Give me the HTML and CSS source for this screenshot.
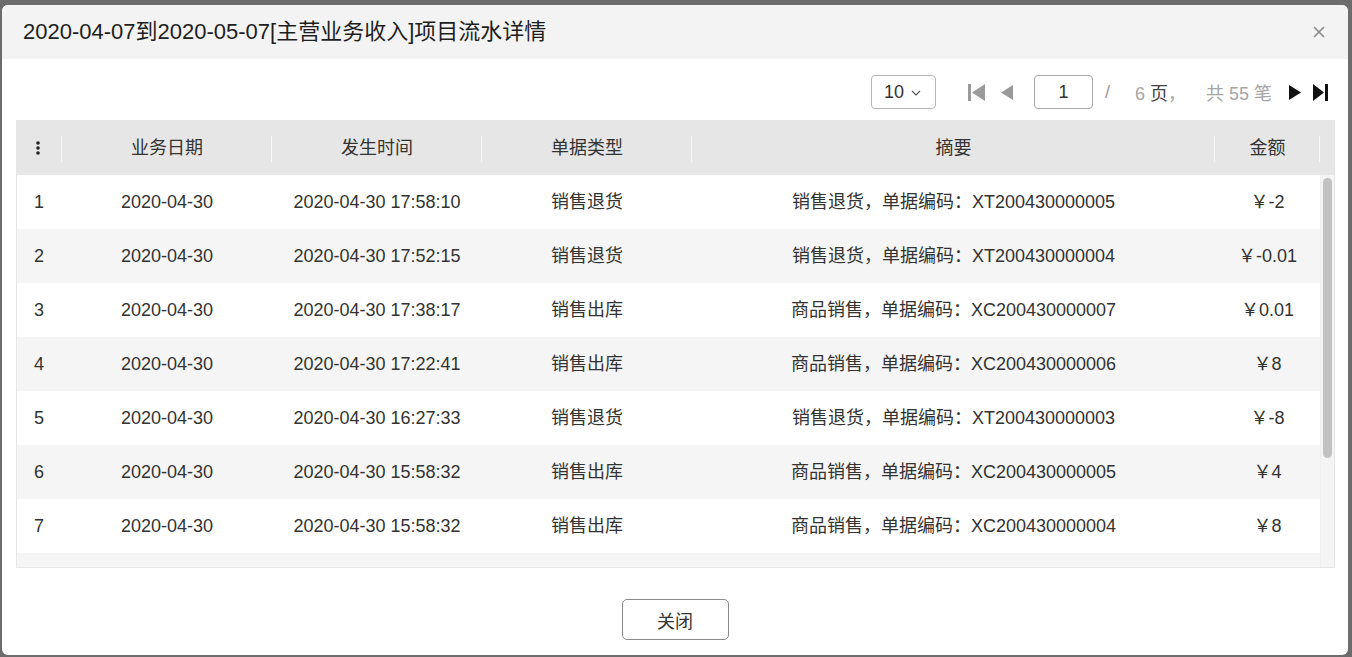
FILE: index.html
```html
<!DOCTYPE html>
<html lang="zh-CN">
<head>
<meta charset="utf-8">
<title>项目流水详情</title>
<link rel="stylesheet" href="styles.css">
</head>
<body>
<div class="dialog">
  <div class="dlg-head">
    <div class="dlg-title">2020-04-07到2020-05-07[主营业务收入]项目流水详情</div>
    <svg class="dlg-close" width="12" height="12" viewBox="0 0 12 12"><path d="M1 1L11 11M11 1L1 11" stroke="#8a8a8a" stroke-width="1.6" fill="none"/></svg>
  </div>
  <div class="toolbar">
    <div class="size-select"><span>10</span><svg width="10" height="6" viewBox="0 0 10 6"><path d="M1 1L5 5L9 1" stroke="#555" stroke-width="1.2" fill="none"/></svg></div>
    <svg class="pg-first" width="17" height="17" viewBox="0 0 17 17"><rect x="0" y="0" width="3" height="17" fill="#9a9a9a"/><path d="M17 0L4 8.5L17 17Z" fill="#9a9a9a"/></svg>
    <svg class="pg-prev" width="12" height="17" viewBox="0 0 12 17"><path d="M12 1L0 8.5L12 16Z" fill="#9a9a9a"/></svg>
    <div class="pg-input">1</div>
    <span class="pg-slash">/</span>
    <span class="pg-muted pg-pages">6 <span class="pg-dark">页</span>，</span>
    <span class="pg-muted pg-total">共 55 笔</span>
    <svg class="pg-next" width="12" height="17" viewBox="0 0 12 17"><path d="M0 1L12 8.5L0 16Z" fill="#111"/></svg>
    <svg class="pg-last" width="15" height="17" viewBox="0 0 15 17"><path d="M0 0L11 8.5L0 17Z" fill="#111"/><rect x="12" y="0" width="3" height="17" fill="#111"/></svg>
  </div>
  <div class="grid">
    <div class="grid-head">
      <div class="hcell hmenu"><svg width="4" height="14" viewBox="0 0 4 14"><circle cx="2" cy="2" r="1.8" fill="#222"/><circle cx="2" cy="7" r="1.8" fill="#222"/><circle cx="2" cy="12" r="1.8" fill="#222"/></svg></div>
      <div class="hcell">业务日期</div>
      <div class="hcell">发生时间</div>
      <div class="hcell">单据类型</div>
      <div class="hcell">摘要</div>
      <div class="hcell">金额</div>
      <div class="hcell hpad"></div>
    </div>
    <div class="grid-body">
      <div class="rows">
        <div class="row"><div class="c idx">1</div><div class="c">2020-04-30</div><div class="c">2020-04-30 17:58:10</div><div class="c">销售退货</div><div class="c">销售退货，单据编码：XT200430000005</div><div class="c">￥-2</div></div>
        <div class="row"><div class="c idx">2</div><div class="c">2020-04-30</div><div class="c">2020-04-30 17:52:15</div><div class="c">销售退货</div><div class="c">销售退货，单据编码：XT200430000004</div><div class="c">￥-0.01</div></div>
        <div class="row"><div class="c idx">3</div><div class="c">2020-04-30</div><div class="c">2020-04-30 17:38:17</div><div class="c">销售出库</div><div class="c">商品销售，单据编码：XC200430000007</div><div class="c">￥0.01</div></div>
        <div class="row"><div class="c idx">4</div><div class="c">2020-04-30</div><div class="c">2020-04-30 17:22:41</div><div class="c">销售出库</div><div class="c">商品销售，单据编码：XC200430000006</div><div class="c">￥8</div></div>
        <div class="row"><div class="c idx">5</div><div class="c">2020-04-30</div><div class="c">2020-04-30 16:27:33</div><div class="c">销售退货</div><div class="c">销售退货，单据编码：XT200430000003</div><div class="c">￥-8</div></div>
        <div class="row"><div class="c idx">6</div><div class="c">2020-04-30</div><div class="c">2020-04-30 15:58:32</div><div class="c">销售出库</div><div class="c">商品销售，单据编码：XC200430000005</div><div class="c">￥4</div></div>
        <div class="row"><div class="c idx">7</div><div class="c">2020-04-30</div><div class="c">2020-04-30 15:58:32</div><div class="c">销售出库</div><div class="c">商品销售，单据编码：XC200430000004</div><div class="c">￥8</div></div>
        <div class="row row-partial"></div>
      </div>
      <div class="vscroll"><div class="vthumb"></div></div>
    </div>
  </div>
  <div class="dlg-foot">
    <button class="btn-close" type="button">关闭</button>
  </div>
</div>
</body>
</html>
```

FILE: styles.css
```css
* { box-sizing: border-box; }
html, body { margin: 0; padding: 0; }
body {
  background: #6c6c6c;
  width: 1352px;
  height: 657px;
  overflow: hidden;
  font-family: "Liberation Sans", "Noto Sans CJK SC", sans-serif;
  color: #333;
  padding: 5px 4px 2px 2px;
}
.dialog {
  background: #fff;
  border-radius: 6px;
  height: 650px;
  overflow: hidden;
  display: flex;
  flex-direction: column;
}
.dlg-head {
  height: 54px;
  background: #f3f3f3;
  display: flex;
  align-items: center;
  padding: 0 23px 0 21px;
}
.dlg-title {
  flex: 1;
  font-size: 22px;
  color: #1e1e1e;
  line-height: 28px;
}
.dlg-close { display: block; }

.toolbar {
  display: flex;
  justify-content: flex-end;
  align-items: center;
  padding: 16px 20px 0 0;
  height: 50px;
  font-size: 18px;
}
.size-select {
  width: 65px;
  height: 34px;
  border: 1px solid #b5b5b5;
  border-radius: 4px;
  display: flex;
  align-items: center;
  padding-left: 12px;
  color: #333;
  line-height: 1;
}
.size-select svg { margin-left: 7px; margin-top: 2px; }
.pg-first { margin-left: 32px; }
.pg-prev { margin-left: 16px; }
.pg-input {
  margin-left: 21px;
  width: 59px;
  height: 34px;
  border: 1px solid #aaa;
  border-radius: 4px;
  text-align: center;
  line-height: 32px;
  color: #333;
}
.pg-slash { margin-left: 12px; color: #999; }
.pg-muted { color: #a5a5a5; }
.pg-dark { color: #444; }
.pg-pages { margin-left: 25px; }
.pg-total { margin-left: 20px; }
.pg-next { margin-left: 17px; }
.pg-last { margin-left: 12px; }

.grid {
  margin: 11px 13px 0 14px;
  border: 1px solid #e6e6e6;
  height: 448px;
  display: flex;
  flex-direction: column;
}
.grid-head {
  height: 54px;
  background: #e6e6e6;
  display: grid;
  grid-template-columns: 45px 210px 210px 210px 523px 105px 14px;
  flex: none;
}
.hcell {
  position: relative;
  display: flex;
  align-items: center;
  justify-content: center;
  font-size: 18px;
  color: #333;
  line-height: 24px;
}
.hcell::after {
  content: "";
  position: absolute;
  right: 0;
  top: 15px;
  height: 26px;
  width: 1px;
  background: #f6f6f6;
}
.hpad::after { display: none; }
.hmenu { justify-content: flex-start; padding-left: 19px; }

.grid-body {
  flex: 1;
  display: flex;
  min-height: 0;
}
.rows {
  flex: 1;
  overflow: hidden;
}
.vscroll {
  width: 14px;
  flex: none;
  background: #f4f4f4;
  border-left: 1px solid #efefef;
  padding: 3px 2px 0 2px;
}
.vthumb {
  height: 280px;
  background: #c1c1c1;
  border-radius: 5px;
}
.row {
  display: grid;
  grid-template-columns: 45px 210px 210px 210px 523px 105px;
  height: 54px;
  align-items: center;
  font-size: 18px;
  line-height: 24px;
  color: #333;
}
.row:nth-child(even) { background: #f5f5f5; }
.row-partial { height: 14px; }
.c { text-align: center; white-space: nowrap; }
.c.idx { text-align: left; padding-left: 17px; }

.dlg-foot {
  display: flex;
  justify-content: center;
  padding-top: 31px;
}
.btn-close {
  width: 107px;
  height: 41px;
  border: 1.5px solid #8a8a8a;
  border-radius: 5px;
  background: #fff;
  font-family: "Liberation Sans", "Noto Sans CJK SC", sans-serif;
  font-size: 18px;
  color: #333;
  padding: 0;
}
```
